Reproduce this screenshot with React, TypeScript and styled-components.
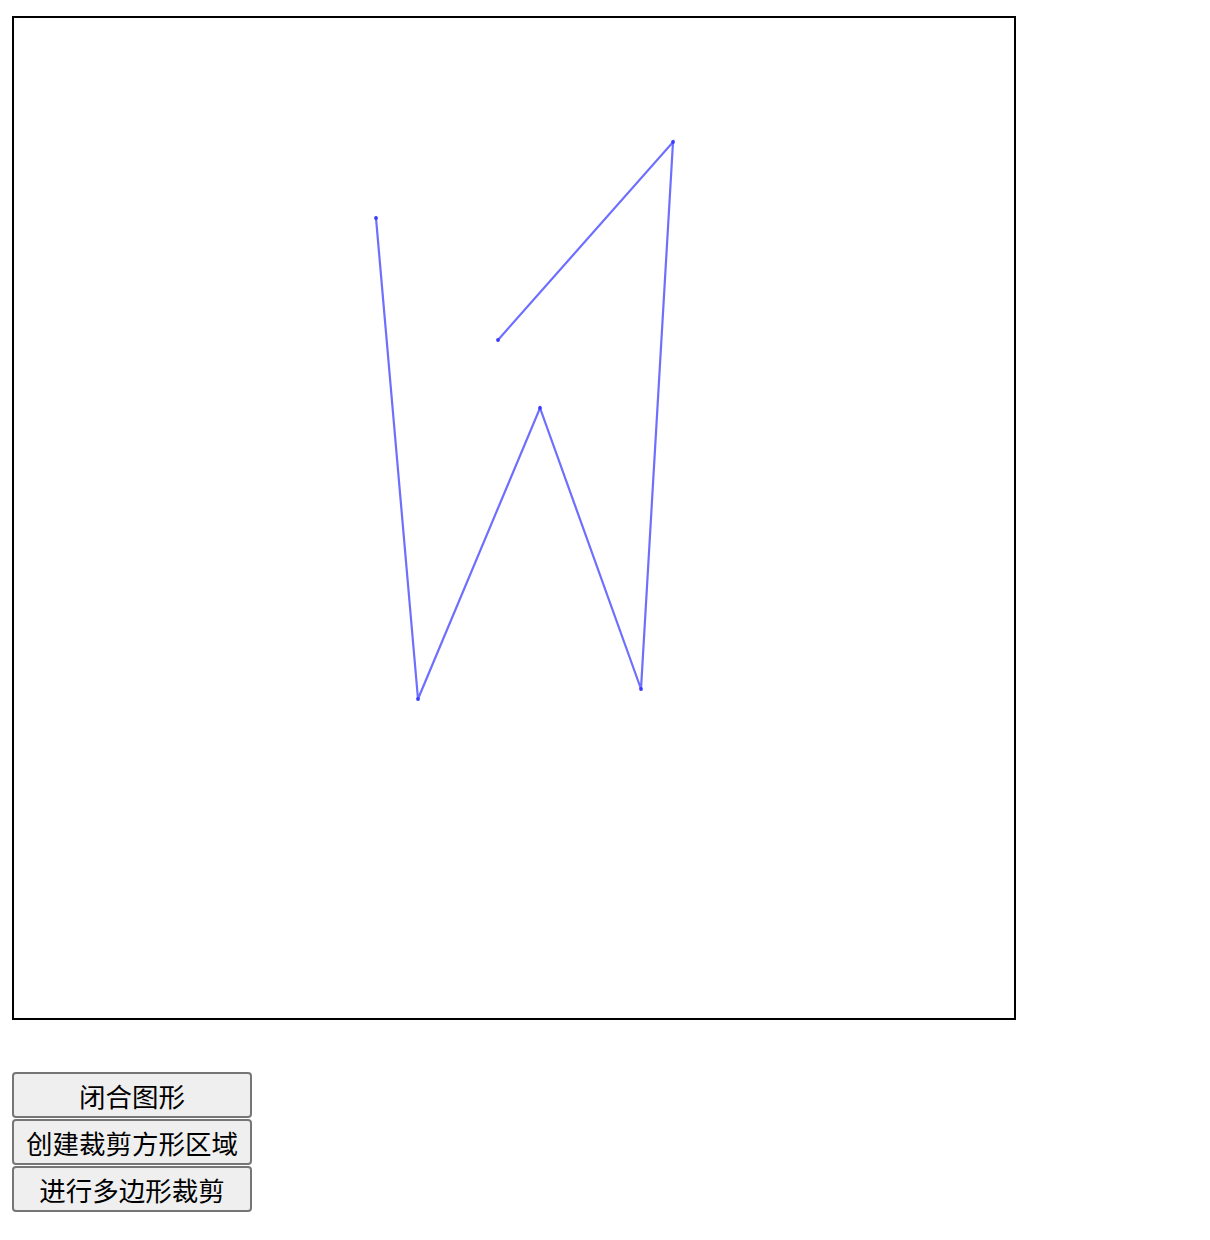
import React from 'react';
import styled, { createGlobalStyle } from 'styled-components';

const GlobalStyle = createGlobalStyle`
    body {
        margin: 0;
        background: #ffffff;
        font-family: "Noto Sans CJK SC", "Noto Sans", sans-serif;
    }
`;

const Page = styled.div`
    padding: 16px 0 0 12px;
`;

const Board = styled.div`
    width: 1000px;
    height: 1000px;
    border: 2px solid #000000;
    background: #ffffff;
`;

const Tools = styled.div`
    margin-top: 52px;
    display: flex;
    flex-direction: column;
    gap: 1px;
`;

const ToolButton = styled.button`
    box-sizing: border-box;
    width: 240px;
    height: 46px;
    padding: 3px 0 0;
    background: #efefef;
    color: #000000;
    border: 2px solid #767676;
    border-radius: 4px;
    font-family: "Noto Sans CJK SC", "Noto Sans", sans-serif;
    font-size: 26.5px;
    line-height: 1;
    white-space: nowrap;
`;

// vertices in canvas coordinates, in drawing order
const points: [number, number][] = [
    [362, 200],
    [404, 681],
    [526, 390],
    [627, 671],
    [659, 124],
    [484, 322],
];

const Drawing = () => (
    <svg width={1000} height={1000} viewBox="0 0 1000 1000">
        <polyline
            points={points.map(p => p.join(',')).join(' ')}
            fill="none"
            stroke="#4a4aff"
            strokeWidth={2.2}
            strokeOpacity={0.8}
            strokeLinejoin="miter"
        />
        {points.map(([x, y], i) => (
            <circle key={i} cx={x} cy={y} r={1.9} fill="#3a3aff" />
        ))}
    </svg>
);

const App = () => {
    const labels = ['闭合图形', '创建裁剪方形区域', '进行多边形裁剪'];
    return (
        <Page>
            <GlobalStyle />
            <Board>
                <Drawing />
            </Board>
            <Tools>
                {labels.map(label => (
                    <ToolButton key={label}>{label}</ToolButton>
                ))}
            </Tools>
        </Page>
    );
};

export default App;
